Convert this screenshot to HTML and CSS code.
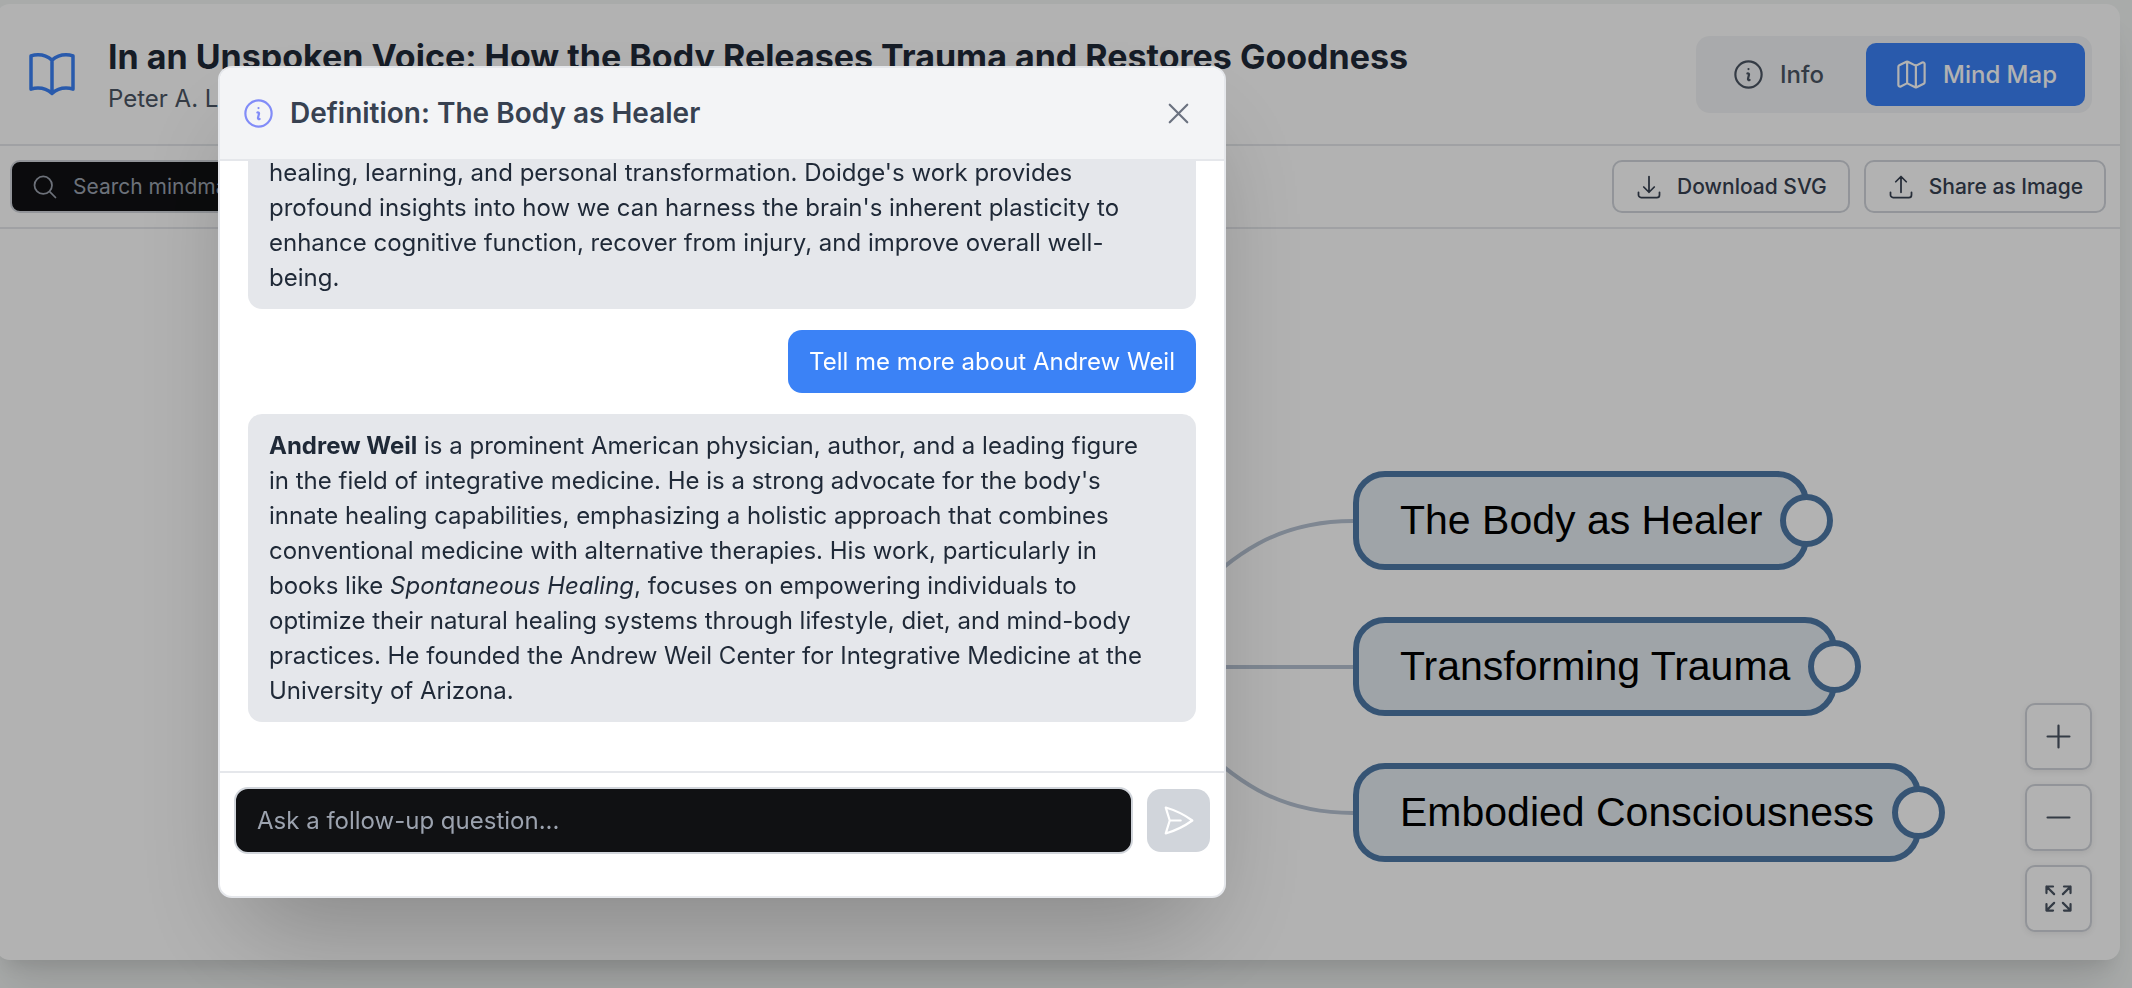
FILE: index.html
```html
<!DOCTYPE html>
<html lang="en">
<head>
    <meta charset="UTF-8">
    <title>In an Unspoken Voice - Mind Map</title>
    <link rel="stylesheet" href="styles.css">
</head>
<body>
    <div class="card">
        <header class="card-header">
            <svg class="icon book-icon" viewBox="0 0 24 24"><path d="M12 6.042A8.967 8.967 0 0 0 6 3.75c-1.052 0-2.062.18-3 .512v14.25A8.987 8.987 0 0 1 6 18c2.305 0 4.408.867 6 2.292m0-14.25a8.966 8.966 0 0 1 6-2.292c1.052 0 2.062.18 3 .512v14.25A8.987 8.987 0 0 0 18 18a8.967 8.967 0 0 0-6 2.292m0-14.25v14.25"/></svg>
            <div class="book-info">
                <h1>In an Unspoken Voice: How the Body Releases Trauma and Restores Goodness</h1>
                <p>Peter A. Levine</p>
            </div>
            <div class="tabs">
                <button class="tab">
                    <svg class="icon" viewBox="0 0 24 24"><path d="m11.25 11.25.041-.02a.75.75 0 0 1 1.063.852l-.708 2.836a.75.75 0 0 0 1.063.853l.041-.021M21 12a9 9 0 1 1-18 0 9 9 0 0 1 18 0Zm-9-3.75h.008v.008H12V8.25Z"/></svg>
                    Info
                </button>
                <button class="tab active">
                    <svg class="icon" viewBox="0 0 24 24"><path d="M9 6.75V18m6-12v11.25m.503 3.498 4.875-2.437c.381-.19.622-.58.622-1.006V4.82c0-.836-.88-1.38-1.628-1.006l-3.869 1.934c-.317.159-.69.159-1.006 0L9.503 3.252a1.125 1.125 0 0 0-1.006 0L3.622 5.689C3.24 5.88 3 6.27 3 6.695V19.18c0 .836.88 1.38 1.628 1.006l3.869-1.934c.317-.159.69-.159 1.006 0l4.994 2.497c.317.158.69.158 1.006 0ZM9 3.5v4M15 5.5v4M9 17v1M15 16v4.5"/></svg>
                    Mind Map
                </button>
            </div>
        </header>

        <div class="toolbar">
            <label class="search">
                <svg class="icon" viewBox="0 0 24 24"><path d="m21 21-5.197-5.197m0 0A7.5 7.5 0 1 0 5.196 5.196a7.5 7.5 0 0 0 10.607 10.607Z"/></svg>
                <input type="text" placeholder="Search mindmap..." aria-label="Search mindmap">
            </label>
            <div class="toolbar-actions">
                <button class="tool-btn">
                    <svg class="icon" viewBox="0 0 24 24"><path d="M3 16.5v2.25A2.25 2.25 0 0 0 5.25 21h13.5A2.25 2.25 0 0 0 21 18.75V16.5M16.5 12 12 16.5m0 0L7.5 12m4.5 4.5V3"/></svg>
                    Download SVG
                </button>
                <button class="tool-btn">
                    <svg class="icon" viewBox="0 0 24 24"><path d="M3 16.5v2.25A2.25 2.25 0 0 0 5.25 21h13.5A2.25 2.25 0 0 0 21 18.75V16.5m-13.5-9L12 3m0 0 4.5 4.5M12 3v13.5"/></svg>
                    Share as Image
                </button>
            </div>
        </div>

        <div class="canvas">
            <svg class="links">
                <path d="M1036 438C1197 438 1197 292 1357 292"/>
                <path d="M1036 438H1357"/>
                <path d="M1036 438C1197 438 1197 584 1357 584"/>
            </svg>
            <div class="node node-healer">The Body as Healer<button class="toggle" aria-label="Expand"></button></div>
            <div class="node node-trauma">Transforming Trauma<button class="toggle" aria-label="Expand"></button></div>
            <div class="node node-conscious">Embodied Consciousness<button class="toggle" aria-label="Expand"></button></div>

            <div class="zoom-controls">
                <button aria-label="Zoom in"><svg class="icon" viewBox="0 0 24 24"><path d="M12 4.5v15m7.5-7.5h-15"/></svg></button>
                <button aria-label="Zoom out"><svg class="icon" viewBox="0 0 24 24"><path d="M19.5 12h-15"/></svg></button>
                <button aria-label="Fit to screen"><svg class="icon" viewBox="0 0 24 24"><path d="M3.75 3.75v4.5m0-4.5h4.5m-4.5 0L9 9M3.75 20.25v-4.5m0 4.5h4.5m-4.5 0L9 15M20.25 3.75h-4.5m4.5 0v4.5m0-4.5L15 9m5.25 11.25h-4.5m4.5 0v-4.5m0 4.5L15 15"/></svg></button>
            </div>
        </div>
    </div>

    <div class="overlay"></div>

    <div class="modal" role="dialog" aria-labelledby="modalTitle">
        <div class="modal-header">
            <svg class="icon" viewBox="0 0 24 24"><path d="m11.25 11.25.041-.02a.75.75 0 0 1 1.063.852l-.708 2.836a.75.75 0 0 0 1.063.853l.041-.021M21 12a9 9 0 1 1-18 0 9 9 0 0 1 18 0Zm-9-3.75h.008v.008H12V8.25Z"/></svg>
            <h2 id="modalTitle">Definition: The Body as Healer</h2>
            <button class="close-btn" aria-label="Close"><svg class="icon" viewBox="0 0 24 24"><path d="M6 18 18 6M6 6l12 12"/></svg></button>
        </div>
        <div class="messages">
            <div class="message">
                healing, learning, and personal transformation. Doidge's work provides<br>
                profound insights into how we can harness the brain's inherent plasticity to<br>
                enhance cognitive function, recover from injury, and improve overall well-<br>
                being.
            </div>
            <div class="message user">Tell me more about Andrew Weil</div>
            <div class="message">
                <strong>Andrew Weil</strong> is a prominent American physician, author, and a leading figure<br>
                in the field of integrative medicine. He is a strong advocate for the body's<br>
                innate healing capabilities, emphasizing a holistic approach that combines<br>
                conventional medicine with alternative therapies. His work, particularly in<br>
                books like <em>Spontaneous Healing</em>, focuses on empowering individuals to<br>
                optimize their natural healing systems through lifestyle, diet, and mind-body<br>
                practices. He founded the Andrew Weil Center for Integrative Medicine at the<br>
                University of Arizona.
            </div>
        </div>
        <form class="ask">
            <input type="text" placeholder="Ask a follow-up question..." aria-label="Ask a follow-up question">
            <button type="submit" aria-label="Send" disabled><svg class="icon" viewBox="0 0 24 24"><path d="M6 12 3.269 3.125A59.769 59.769 0 0 1 21.485 12 59.768 59.768 0 0 1 3.27 20.875L5.999 12Zm0 0h7.5"/></svg></button>
        </form>
    </div>
</body>
</html>
```

FILE: styles.css
```css
* {
    box-sizing: border-box;
}
body {
    margin: 0;
    height: 100vh;
    padding: 4px 12px 28px 0;
    overflow: hidden;
    background-color: #f2f5f4;
    font-family: Inter, "Liberation Sans", sans-serif;
    font-size: 24px;
    line-height: 35px;
    color: #1f2937;
}
h1, h2, p {
    margin: 0;
}
button, input {
    font: inherit;
}
button {
    display: flex;
    align-items: center;
    justify-content: center;
    border: none;
    padding: 0;
    background: none;
    cursor: pointer;
}
.icon {
    width: 35px;
    height: 35px;
    flex-shrink: 0;
    fill: none;
    stroke: currentColor;
    stroke-width: 1.5;
    stroke-linecap: round;
    stroke-linejoin: round;
}

.card {
    display: flex;
    flex-direction: column;
    height: 100%;
    margin-left: -4px;
    background-color: white;
    border-radius: 14px;
    box-shadow: 0 35px 44px -9px rgba(0, 0, 0, 0.1), 0 14px 18px -10px rgba(0, 0, 0, 0.1);
}
.card-header {
    display: flex;
    align-items: center;
    padding: 28px;
    border-bottom: 2px solid #e5e7eb;
    height: 142px;
}
.book-icon {
    width: 56px;
    height: 56px;
    color: #3b82f6;
}
.book-info {
    flex: 1;
    margin-left: 28px;
}
.book-info h1 {
    font-size: 34px;
    line-height: 49px;
    font-weight: 700;
    color: #1f2937;
}
.book-info p {
    color: #4b5563;
}
.tabs {
    display: flex;
    gap: 14px;
    padding: 7px;
    border-radius: 14px;
    background-color: #f3f4f6;
}
.tab {
    gap: 14px;
    padding: 14px 28px;
    border-radius: 10px;
    font-weight: 500;
    color: #4b5563;
}
.tab.active {
    background-color: #3b82f6;
    color: white;
}

.toolbar {
    display: flex;
    justify-content: space-between;
    padding: 14px;
    border-bottom: 2px solid #e5e7eb;
    font-size: 21px;
    line-height: 29px;
}
.toolbar .icon {
    width: 28px;
    height: 28px;
}
.toolbar-actions {
    display: flex;
    gap: 14px;
}
.search {
    display: flex;
    align-items: center;
    gap: 14px;
    width: 448px;
    padding: 10px 19px;
    border: 2px solid #d1d5db;
    border-radius: 10px;
    background-color: #101113;
    color: #9ca3af;
}
.search input {
    width: 100%;
    padding: 0;
    border: none;
    background: none;
    color: white;
}
input::placeholder {
    color: #9ca3af;
    opacity: 1;
}
.tool-btn {
    gap: 14px;
    padding: 10px 21px;
    border: 2px solid #d1d5db;
    border-radius: 10px;
    font-weight: 500;
    color: #374151;
}

.canvas {
    position: relative;
    flex: 1;
}
.links {
    position: absolute;
    width: 100%;
    height: 100%;
    fill: none;
    stroke: #b6c2d2;
    stroke-width: 4;
}
/* nodes are placed by their spot on the map */
.node {
    position: absolute;
    left: 1357px;
    padding: 0 41px;
    border: 6px solid #4e79a7;
    border-radius: 32px;
    background-color: #e4ebf1;
    font-family: "Liberation Sans", Arial, sans-serif;
    font-size: 41px;
    line-height: 87px;
    color: black;
    white-space: nowrap;
}
.node-healer {
    top: 242px;
}
.node-trauma {
    top: 388px;
}
.node-conscious {
    top: 534px;
}
.toggle {
    position: absolute;
    top: 17px;
    right: -30px;
    width: 53px;
    height: 53px;
    border: 6px solid #4e79a7;
    border-radius: 50%;
    background-color: white;
}
.zoom-controls {
    position: absolute;
    right: 28px;
    bottom: 28px;
    display: flex;
    flex-direction: column;
    gap: 14px;
}
.zoom-controls button {
    padding: 14px;
    border: 2px solid #d1d5db;
    border-radius: 10px;
    background-color: white;
    color: #4b5563;
    box-shadow: 0 2px 6px rgba(0, 0, 0, 0.08);
}

.overlay {
    position: fixed;
    inset: 0;
    background-color: rgba(0, 0, 0, 0.3);
}
.modal {
    position: fixed;
    top: 66px;
    left: 218px;
    display: flex;
    flex-direction: column;
    width: 1008px;
    height: 832px;
    padding-bottom: 28px;
    border: 2px solid #e5e7eb;
    border-radius: 14px;
    background-color: white;
    box-shadow: 0 50px 100px -24px rgba(0, 0, 0, 0.25);
}
.modal-header {
    display: flex;
    align-items: center;
    gap: 14px;
    padding: 21px;
    border-bottom: 2px solid #e5e7eb;
    border-radius: 12px 12px 0 0;
    background-color: #f3f4f6;
    color: #818cf8;
}
.modal-header h2 {
    flex: 1;
    font-size: 28px;
    font-weight: 600;
    color: #374151;
}
.close-btn {
    padding: 7px;
    color: #6b7280;
}
.messages {
    flex: 1;
    display: flex;
    flex-direction: column;
    justify-content: flex-end;
    align-items: stretch;
    gap: 21px;
    min-height: 0;
    padding: 0 28px 49px;
    overflow: hidden;
}
.message {
    flex-shrink: 0;
    padding: 14px 21px;
    border-radius: 14px;
    background-color: #e5e7eb;
    color: #1f2937;
}
.message.user {
    align-self: flex-end;
    background-color: #3b82f6;
    color: white;
}
.ask {
    display: flex;
    align-items: center;
    gap: 14px;
    padding: 14px;
    border-top: 2px solid #e5e7eb;
}
.ask input {
    flex: 1;
    padding: 14px 21px;
    border: 2px solid #d1d5db;
    border-radius: 14px;
    background-color: #101113;
    color: white;
}
.ask button {
    padding: 14px;
    border-radius: 14px;
    background-color: #d1d5db;
    color: white;
}
```
